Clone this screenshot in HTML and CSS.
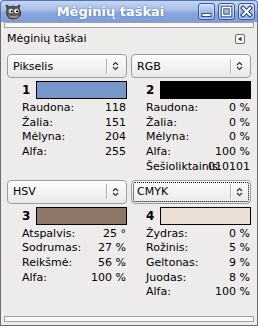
FILE: index.html
```html
<!DOCTYPE html>
<html lang="lt">
<head>
<meta charset="utf-8">
<title>Mėginių taškai</title>
<link rel="stylesheet" href="styles.css">
</head>
<body>
<div class="window">
  <div class="titlebar">
    <svg class="appicon" width="18" height="16" viewBox="0 0 18 16">
      <path d="M2 4 L1 1 L5 3 L8 2 L11 3 L15 1 L14 5 Q17 8 15 12 Q12 15 8 15 Q3 15 2 11 Q1 7 2 4 Z" fill="#5e574c" stroke="#2b2823" stroke-width="0.8"/>
      <path d="M3 11 Q6 13 9 12 Q12 11 14 12 Q12 14 8 14 Q4 14 3 11 Z" fill="#a89c8a"/>
      <circle cx="6" cy="7" r="2.6" fill="#fff" stroke="#222" stroke-width="0.5"/>
      <circle cx="11.5" cy="7" r="2.6" fill="#fff" stroke="#222" stroke-width="0.5"/>
      <circle cx="6.6" cy="7.3" r="1.1" fill="#000"/>
      <circle cx="12.1" cy="7.3" r="1.1" fill="#000"/>
    </svg>
    <div class="title">Mėginių taškai</div>
    <div class="wbtns">
      <div class="wbtn">
        <svg width="17" height="17" viewBox="0 0 17 17"><rect x="4" y="10.5" width="9" height="3" fill="#fff" stroke="#2f4c86" stroke-width="1"/></svg>
      </div>
      <div class="wbtn">
        <svg width="17" height="17" viewBox="0 0 17 17"><rect x="4.5" y="4.5" width="8" height="8" fill="none" stroke="#2f4c86" stroke-width="3.5"/><rect x="4.5" y="4.5" width="8" height="8" fill="none" stroke="#fff" stroke-width="1.6"/></svg>
      </div>
      <div class="wbtn">
        <svg width="17" height="17" viewBox="0 0 17 17"><path d="M5 5 L12 12 M12 5 L5 12" stroke="#2f4c86" stroke-width="4.2" stroke-linecap="square"/><path d="M5 5 L12 12 M12 5 L5 12" stroke="#fff" stroke-width="2" stroke-linecap="square"/></svg>
      </div>
    </div>
  </div>
  <div class="client">
    <div class="strip"></div>
    <div class="dock">
      <div class="dockhead">
        <span>Mėginių taškai</span>
        <span class="menubtn"><svg width="10" height="10" viewBox="0 0 10 10"><rect x="0.5" y="0.5" width="9" height="9" rx="1.5" fill="#f6f6f6" stroke="#6d6d6d"/><path d="M3 5 L6.5 2.8 L6.5 7.2 Z" fill="#333"/></svg></span>
      </div>
      <div class="grid">
        <section class="panel">
          <div class="combo"><span class="ctext">Pikselis</span><span class="csep"></span><svg class="carrow" width="7" height="10" viewBox="0 0 7 10"><path d="M1 4 L3.5 1.5 L6 4 M1 6 L3.5 8.5 L6 6" fill="none" stroke="#333" stroke-width="1.2"/></svg></div>
          <div class="swrow"><b class="num">1</b><div class="swatch sw1"></div></div>
          <div class="rows">
            <span>Raudona:</span><span class="v">118</span>
            <span>Žalia:</span><span class="v">151</span>
            <span>Mėlyna:</span><span class="v">204</span>
            <span>Alfa:</span><span class="v">255</span>
          </div>
        </section>
        <section class="panel">
          <div class="combo"><span class="ctext">RGB</span><span class="csep"></span><svg class="carrow" width="7" height="10" viewBox="0 0 7 10"><path d="M1 4 L3.5 1.5 L6 4 M1 6 L3.5 8.5 L6 6" fill="none" stroke="#333" stroke-width="1.2"/></svg></div>
          <div class="swrow"><b class="num">2</b><div class="swatch sw2"></div></div>
          <div class="rows">
            <span>Raudona:</span><span class="v">0 %</span>
            <span>Žalia:</span><span class="v">0 %</span>
            <span>Mėlyna:</span><span class="v">0 %</span>
            <span>Alfa:</span><span class="v">100 %</span>
            <span>Šešioliktainis:</span><span class="v">010101</span>
          </div>
        </section>
        <section class="panel">
          <div class="combo"><span class="ctext">HSV</span><span class="csep"></span><svg class="carrow" width="7" height="10" viewBox="0 0 7 10"><path d="M1 4 L3.5 1.5 L6 4 M1 6 L3.5 8.5 L6 6" fill="none" stroke="#333" stroke-width="1.2"/></svg></div>
          <div class="swrow"><b class="num">3</b><div class="swatch sw3"></div></div>
          <div class="rows">
            <span>Atspalvis:</span><span class="v">25 °</span>
            <span>Sodrumas:</span><span class="v">27 %</span>
            <span>Reikšmė:</span><span class="v">56 %</span>
            <span>Alfa:</span><span class="v">100 %</span>
          </div>
        </section>
        <section class="panel">
          <div class="combo focus"><span class="ctext">CMYK</span><span class="csep"></span><svg class="carrow" width="7" height="10" viewBox="0 0 7 10"><path d="M1 4 L3.5 1.5 L6 4 M1 6 L3.5 8.5 L6 6" fill="none" stroke="#333" stroke-width="1.2"/></svg></div>
          <div class="swrow"><b class="num">4</b><div class="swatch sw4"></div></div>
          <div class="rows">
            <span>Žydras:</span><span class="v">0 %</span>
            <span>Rožinis:</span><span class="v">5 %</span>
            <span>Geltonas:</span><span class="v">9 %</span>
            <span>Juodas:</span><span class="v">8 %</span>
            <span>Alfa:</span><span class="v">100 %</span>
          </div>
        </section>
      </div>
    </div>
    <div class="strip bottom"></div>
  </div>
</div>
</body>
</html>
```
FILE: styles.css
```css
html, body {
  margin: 0;
  padding: 0;
}
body {
  width: 258px;
  height: 326px;
  overflow: hidden;
  background: #edeceb;
  font-family: "DejaVu Sans", "Liberation Sans", sans-serif;
  font-size: 11px;
  color: #000;
}
.window {
  width: 258px;
  height: 326px;
  display: flex;
  flex-direction: column;
}
.titlebar {
  height: 22px;
  box-sizing: border-box;
  display: flex;
  align-items: center;
  padding: 0 2px 0 4px;
  background: linear-gradient(#c6d6f1 0%, #a5bde7 45%, #8aa8de 55%, #7e9dd8 100%);
  border: 1px solid #5676b0;
  border-bottom: none;
  border-radius: 4px 4px 0 0;
}
.appicon {
  flex: none;
}
.title {
  flex: 1;
  text-align: center;
  color: #fff;
  font-weight: bold;
  font-size: 13px;
  text-shadow: 0 0 2px #4a67a0;
}
.wbtns {
  display: flex;
  gap: 3px;
}
.wbtn {
  width: 17px;
  height: 17px;
  box-sizing: border-box;
  border: 1px solid #3b5894;
  border-radius: 3px;
  background: linear-gradient(#d2def4, #a3bbe6 50%, #8eaadf);
  box-shadow: inset 0 0 0 1px rgba(255,255,255,0.45);
  display: flex;
  align-items: center;
  justify-content: center;
}
.wbtn svg {
  display: block;
  margin: -1px;
}
.client {
  flex: 1;
  display: flex;
  flex-direction: column;
  border: 1px solid #6e6e6e;
  border-top: none;
  padding: 0 3px 3px;
}
.strip {
  height: 6px;
  box-sizing: border-box;
  border: 1px solid #a2a2a2;
  background: #f7f7f7;
  flex: none;
}
.dock {
  flex: 1;
  padding: 0 3px;
}
.dockhead {
  margin-top: 3px;
  height: 16px;
  line-height: 16px;
  display: flex;
  align-items: center;
  justify-content: space-between;
  padding-right: 6px;
}
.menubtn svg {
  display: block;
}
.grid {
  margin-top: 7px;
  display: grid;
  grid-template-columns: 120px 120px;
  column-gap: 4px;
  row-gap: 5px;
}
.panel {
  min-width: 0;
}
.combo {
  height: 24px;
  box-sizing: border-box;
  border: 1px solid #9d9d9d;
  border-radius: 4px;
  background: linear-gradient(#fdfdfd, #f1f1f1 60%, #e8e8e8);
  display: flex;
  align-items: center;
  padding-left: 5px;
}
.combo.focus {
  outline: 1px dotted #000;
  outline-offset: -3px;
}
.ctext {
  flex: 1;
}
.csep {
  width: 1px;
  height: 15px;
  background: #b0b0b0;
  box-shadow: 1px 0 0 #fff;
  margin-right: 5px;
}
.carrow {
  display: block;
  margin-right: 7px;
}
.swrow {
  margin-top: 3px;
  height: 18px;
  display: flex;
  align-items: center;
  padding-left: 15px;
}
.num {
  width: 14px;
  font-size: 12px;
}
.swatch {
  flex: 1;
  height: 18px;
  box-sizing: border-box;
  border: 1px solid #000;
}
.sw1 { background: #7697cc; }
.sw2 { background: #010101; }
.sw3 { background: #8f7868; }
.sw4 { background: #ebdfd6; }
.rows {
  margin-top: 2px;
  display: grid;
  grid-template-columns: minmax(0, 1fr) auto;
  line-height: 14.7px;
  padding: 0 1px 0 15px;
  white-space: nowrap;
}
.v {
  text-align: right;
}
.strip.bottom {
  margin-top: 0;
}
```
